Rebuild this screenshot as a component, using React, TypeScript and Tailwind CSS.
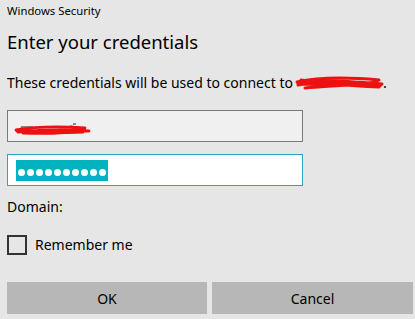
import React from "react";

export default function App() {
  return (
    <div className="w-[415px] h-[319px] bg-[#e6e6e6] overflow-hidden text-[#000]" style={{ fontFamily: '"Noto Sans", "Open Sans", sans-serif' }}>
      <div className="pl-[7px] pr-[2px] pt-[3px] flex flex-col">
        <div className="text-[11.3px] leading-[16px] h-[16px]">Windows Security</div>
        <div className="mt-[10px] text-[18.5px] leading-[26px] h-[26px]">Enter your credentials</div>
        <div className="mt-[18px] text-[14px] leading-[20px] h-[20px] flex items-center">
          <span>These credentials will be used to connect to</span>
          <span className="relative inline-block w-[88px] h-[20px] ml-[2px]">
            <svg width="90" height="20" viewBox="0 0 90 20" className="absolute left-0 top-0">
              <path d="M2 9 C 20 5, 50 4, 84 7 M3 12 C 25 8, 55 8, 87 11 M6 7 C 30 11, 60 13, 84 14 M10 15 C 35 13, 60 12, 82 9 M3 11 L 86 12 M8 10 C 40 6, 70 9, 85 13" stroke="#ee1111" strokeWidth="3" fill="none" strokeLinecap="round" />
            </svg>
          </span>
          <span>.</span>
        </div>
        <div className="mt-[17px] w-[296px] h-[32px] border border-[#7a7a7a] bg-[#f0f0f0] relative">
          <svg width="80" height="16" viewBox="0 0 80 16" className="absolute left-[5px] top-[11px]">
            <path d="M60 2 L 63 2 M57 4 L 66 5 M8 5 L 20 5" stroke="#222" strokeWidth="1" fill="none" />
            <path d="M3 8 C 20 5, 45 4, 72 6 M5 10 C 25 8, 50 7, 76 9 M8 7 C 30 10, 55 11, 70 10 M4 9 L 74 9 M10 11 C 30 12, 55 11, 72 8" stroke="#ee1111" strokeWidth="2.8" fill="none" strokeLinecap="round" />
          </svg>
        </div>
        <div className="mt-[12px] w-[296px] h-[32px] border border-[#2ba6b8] bg-white flex items-center pl-[8px]">
          <div className="h-[21px] w-[92px] bg-[#00b3bf] flex items-center gap-[2px] pl-[2px] pt-[4px]">
            {Array.from({ length: 10 }).map((_, i) => (
              <span key={i} className="w-[7px] h-[7px] rounded-full bg-white" />
            ))}
          </div>
        </div>
        <div className="mt-[11px] text-[14px] leading-[20px] h-[20px]">Domain:</div>
        <div className="mt-[18px] flex items-center h-[20px]">
          <div className="w-[20px] h-[20px] border-2 border-[#333]" />
          <span className="ml-[8px] text-[14px] leading-[20px]">Remember me</span>
        </div>
        <div className="mt-[27px] flex gap-[5px]">
          <div className="w-[200px] h-[32px] bg-[#b7b7b7] flex items-center justify-center text-[14px]">OK</div>
          <div className="w-[201px] h-[32px] bg-[#b7b7b7] flex items-center justify-center text-[14px]">Cancel</div>
        </div>
      </div>
    </div>
  );
}
